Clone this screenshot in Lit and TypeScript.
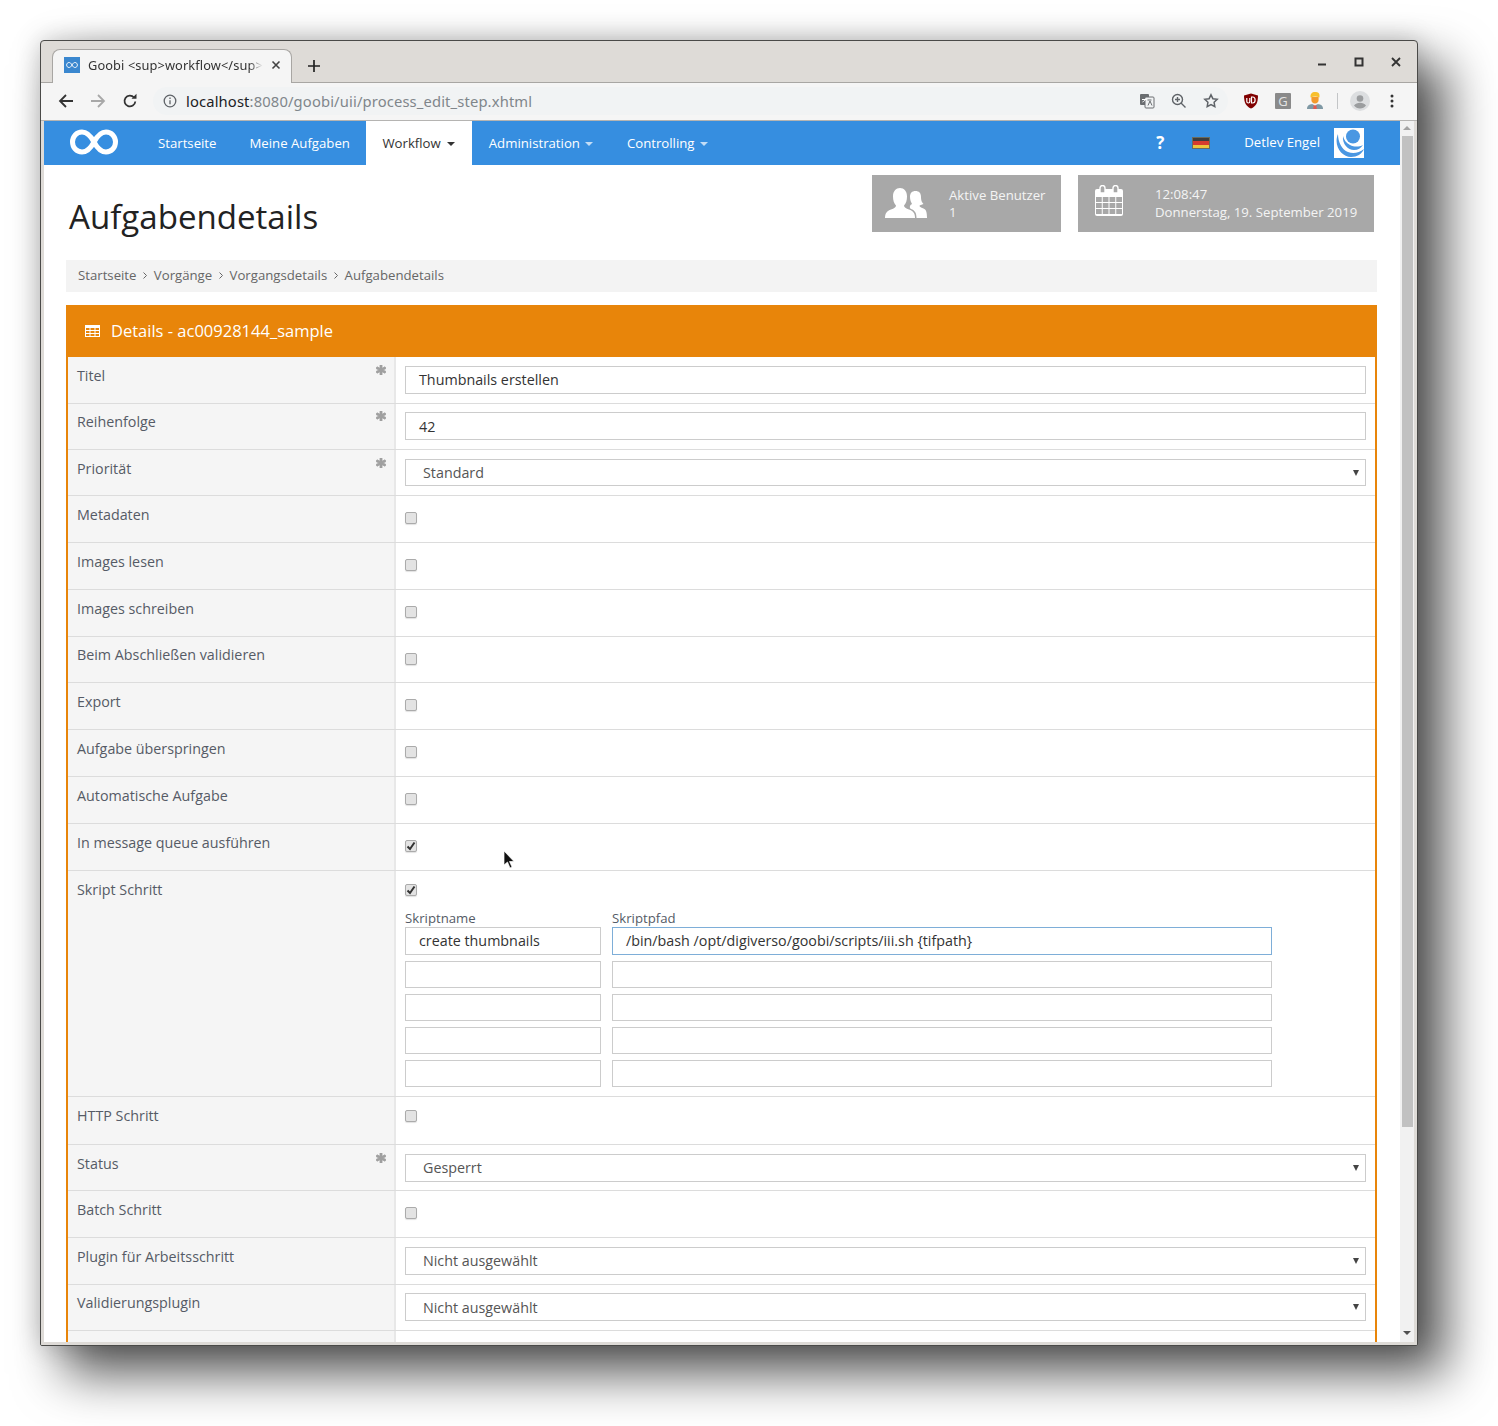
import { LitElement, html, css, svg } from "lit";
import { customElement } from "lit/decorators.js";

type Row = { label: string; h: number; req?: boolean; kind: "input" | "select" | "check" | "checked" | "script" | "blank"; value?: string; cls?: string };

const rows: Row[] = [
  { label: "Titel", h: 47, req: true, kind: "input", value: "Thumbnails erstellen" },
  { label: "Reihenfolge", h: 46, req: true, kind: "input", value: "42", cls: "tight lift" },
  { label: "Priorität", h: 46, req: true, kind: "select", value: "Standard", cls: "short" },
  { label: "Metadaten", h: 47, kind: "check" },
  { label: "Images lesen", h: 47, kind: "check" },
  { label: "Images schreiben", h: 47, kind: "check" },
  { label: "Beim Abschließen validieren", h: 46, kind: "check", cls: "tight" },
  { label: "Export", h: 47, kind: "check" },
  { label: "Aufgabe überspringen", h: 47, kind: "check" },
  { label: "Automatische Aufgabe", h: 47, kind: "check" },
  { label: "In message queue ausführen", h: 47, kind: "checked" },
  { label: "Skript Schritt", h: 226, kind: "script", cls: "up" },
  { label: "HTTP Schritt", h: 48, kind: "check", cls: "up" },
  { label: "Status", h: 46, req: true, kind: "select", value: "Gesperrt" },
  { label: "Batch Schritt", h: 47, kind: "check" },
  { label: "Plugin für Arbeitsschritt", h: 47, kind: "select", value: "Nicht ausgewählt" },
  { label: "Validierungsplugin", h: 46, kind: "select", value: "Nicht ausgewählt", cls: "tight lift" },
  { label: "", h: 47, kind: "blank" },
];

const infinity = (w: number, h: number, sw: number) => svg`<svg width=${w} height=${h} viewBox="0 0 48 26" fill="none" stroke="#fff" stroke-width=${sw}><path d="M24 13C20 5.500 16.500 3 12 3 6.500 3 2.500 7.500 2.500 13S6.500 23 12 23c4.500 0 8-2.500 12-10s7.500-10 12-10c5.500 0 9.500 4.500 9.500 10S41.500 23 36 23c-4.500 0-8-2.500-12-10z"/></svg>`;

const calCols = [2, 8.75, 15.5, 22.25];
const calRows = [12, 18, 24];

@customElement("app-root")
export class AppRoot extends LitElement {
  static styles = css`
    :host { display: block; width: 1498px; height: 1426px; overflow: hidden; background: #fff; font-family: "Open Sans", "Noto Sans", sans-serif; box-sizing: border-box; padding: 40px 0 0 40px; }
    * { box-sizing: border-box; }
    .window { width: 1378px; height: 1306px; background: #dedbd7; border: 1px solid #4a4a48; border-radius: 4px 4px 2px 2px; box-shadow: 26px 26px 50px 2px rgba(0,0,0,.66), 0 0 26px rgba(0,0,0,.2); display: flex; flex-direction: column; overflow: hidden; }
    .titlebar { height: 42px; flex: none; display: flex; align-items: flex-end; padding-left: 11px; border-bottom: 1px solid #a8a6a3; position: relative; }
    .tab { width: 240px; height: 34px; background: #f5f5f5; border: 1px solid #a8a6a3; border-bottom: 0; border-radius: 8px 8px 0 0; display: flex; align-items: center; padding: 0 9px 4px 11px; margin-bottom: -1px; color: #333; white-space: nowrap; }
    .fav { width: 16px; height: 16px; background: #3a87cf; display: flex; align-items: center; justify-content: center; flex: none; margin-right: 8px; }
    .tabtext { width: 175px; overflow: hidden; font-family: "Noto Sans", sans-serif; font-size: 12.8px; letter-spacing: .1px; -webkit-mask-image: linear-gradient(90deg,#000 92%,transparent); mask-image: linear-gradient(90deg,#000 92%,transparent); }
    .tabx { margin-left: 8px; display: flex; }
    .newtab { margin: 0 0 10px 16px; display: flex; }
    .winctl { position: absolute; right: 3px; top: 0; height: 42px; display: flex; }
    .winctl span { width: 37px; display: flex; align-items: center; justify-content: center; height: 42px; }
    .toolbar { height: 38px; flex: none; background: #f5f5f5; border-bottom: 1px solid #b5b4b2; display: flex; align-items: center; padding: 0 0 2px 9px; }
    .navbtn { width: 32px; height: 32px; display: flex; align-items: center; justify-content: center; flex: none; }
    .omni { width: 1075px; height: 28px; margin-left: 7px; background: #f1f3f4; border-radius: 14px; display: flex; align-items: center; padding: 0 1px 0 10px; font-family: "Noto Sans", sans-serif; font-size: 14.75px; color: #80868b; flex: none; }
    .omni b { font-weight: 400; color: #202124; }
    .omni .url { margin-left: 9px; letter-spacing: .14px; }
    .omni .end { margin-left: auto; display: flex; }
    .ic { width: 32px; height: 28px; display: flex; align-items: center; justify-content: center; }
    .ic.first { margin-left: 7px; }
    .ic.prof { width: 28px; }
    .ic.dots { width: 36px; }
    .ext { display: flex; align-items: center; flex: none; }
    .sep { width: 1px; height: 16px; background: #c3c5c7; margin: 0 8px 0 6px; }
    .gl { font-size: 13px; font-family: "Open Sans", sans-serif; fill: #e4e4e4; }
    .body { flex: 1; min-height: 0; display: flex; padding: 0 3px; overflow: hidden; border-bottom: 3px solid #dedbd7; }
    .page { width: 1356px; height: 1221px; background: #fff; overflow: hidden; flex: none; }
    .scroll { width: 14px; flex: none; background: #f1f1f1; display: flex; flex-direction: column; align-items: center; position: relative; }
    .arrow-up { width: 0; height: 0; border: 4px solid transparent; border-top: 0; border-bottom: 4px solid #a3a3a3; margin-top: 5px; }
    .thumb { width: 11px; height: 991px; background: #c1c1c1; margin-top: 6px; }
    .arrow-down { position: absolute; left: 3px; bottom: 7px; width: 0; height: 0; border: 4px solid transparent; border-bottom: 0; border-top: 4px solid #505050; }

    nav { height: 44px; background: #368ee0; display: flex; align-items: stretch; font-size: 13.2px; color: #fff; }
    .logo { width: 97.500px; display: flex; align-items: center; padding-left: 26px; flex: none; }
    .logo svg { margin-top: -3px; }
    .nitem { padding: 0 16.500px; display: flex; align-items: center; white-space: nowrap; }
    .nitem.dd { padding: 0 17px; }
    .nitem.active { background: #fff; color: #333; padding: 0 17px 0 16px; }
    .caret { display: inline-block; width: 0; height: 0; border: 4px solid transparent; border-bottom: 0; border-top: 4px solid currentColor; margin-left: 5px; margin-top: 1px; opacity: .7; }
    .active .caret { opacity: 1; margin-left: 6px; }
    .nright { margin-left: auto; display: flex; align-items: center; padding-right: 36px; }
    .q { font-size: 17px; font-weight: 700; width: 12px; margin-right: 26px; text-align: center; margin-top: -2px; }
    .flag { width: 18px; height: 12px; margin-right: 34px; display: flex; flex-direction: column; border: 1px solid #6a6a5c; }
    .flag i { flex: 1; }
    .flag .k { background: #3c3c3c; }
    .flag .r { background: #d63b2e; }
    .flag .y { background: #edc43c; }
    .user { margin-right: 14px; margin-top: -2px; }
    .avatar { width: 30px; height: 30px; background: #fff; display: flex; }

    .head { height: 95px; padding: 10px 26px 0 25px; display: flex; align-items: flex-start; }
    h1 { margin: 17px 0 0; font-size: 33.100px; line-height: 50px; font-weight: 400; color: #222; }
    .stat { height: 57px; background: #a8a8a8; color: #f4f4f4; font-size: 13.2px; display: flex; flex: none; }
    .stat svg { flex: none; }
    .s1 { width: 189px; margin-left: auto; padding: 12px 0 0 13px; line-height: 17px; }
    .s2 { width: 296px; margin-left: 17px; padding: 10px 0 0 16px; line-height: 18px; }
    .s1 .t { margin-left: 22px; }
    .s2 .t { margin-left: 31px; }
    .crumbs { margin: 0 23px 13px 22px; height: 32px; background: #f3f3f3; display: flex; align-items: center; padding: 0 0 2px 12px; font-size: 13.2px; color: #666; white-space: nowrap; }
    .crumbs .g { margin: 0 6.700px; width: 4px; display: flex; }
    .panel { margin: 0 23px 0 22px; }
    .phead { height: 52px; background: #e8850a; color: #fff; display: flex; align-items: center; padding: 0 0 2px 19px; font-size: 16.5px; }
    .phead svg { margin: 2px 11px 0 0; }
    .pbody { border-left: 2px solid #e8850a; border-right: 2px solid #e8850a; }
    .row { display: flex; border-bottom: 1px solid #dcdcdc; }
    .lab { width: 328px; flex: none; background: #f5f5f5; padding: 9px 8px 0 9px; font-size: 14.3px; line-height: 20px; color: #555b66; display: flex; justify-content: space-between; border-right: 2px solid #e8e8e8; }
    .tight .lab { padding-top: 8px; }
    .star { width: 10px; height: 10px; margin-top: -1px; }
    .val { flex: 1; padding: 9px 9px 0 9px; min-width: 0; }
    .field { height: 28px; border: 1px solid #ccc; background: #fff; padding: 0 13px 2px; display: flex; align-items: center; font-size: 14.3px; color: #333; white-space: nowrap; }
    .lift .field { margin-top: -1px; padding-bottom: 0; }
    .short .field { height: 27px; padding-bottom: 0; }
    .select { padding: 0 17px 2px; position: relative; color: #555; }
    .select::after { content: ""; position: absolute; right: 6px; top: 10px; border: 3.500px solid transparent; border-bottom: 0; border-top: 6px solid #444; }
    .cb { width: 12px; height: 12px; background: #e3e3e3; border: 1px solid #ababab; border-radius: 2px; margin-top: 7px; display: flex; align-items: center; justify-content: center; box-shadow: 0 1px 1px rgba(0,0,0,.12); }
    .up .cb { margin-top: 4px; }
    .sgrid { display: grid; grid-template-columns: 196px 660px; column-gap: 11px; row-gap: 6px; margin-top: 15px; }
    .sgrid .h { font-size: 13.2px; line-height: 14px; color: #555b66; margin-bottom: -6px; height: 16px; }
    .sgrid .field { height: 27px; }
    .sgrid .first { height: 28px; }
    .focus { border-color: #7eaed8; }
    .cursor { position: absolute; left: 503px; top: 850px; }
  `;

  private toolbarIcons() {
    return html`
      <span class="ic"><svg width="16" height="16" viewBox="0 0 16 16"><rect x="1" y="1" width="9" height="11" rx="1" fill="#6a6d70"/><rect x="6" y="4" width="9" height="11" rx="1" fill="#f1f3f4" stroke="#6a6d70"/><path d="M3 6.500h4.500M3.500 9c1.500-.5 2.500-1.500 3-3.500" stroke="#fff" fill="none"/><path d="M8.500 7h4M9 12.500l2-4.500 2 4.500" stroke="#6a6d70" fill="none"/></svg></span>
      <span class="ic"><svg width="16" height="16" viewBox="0 0 16 16" fill="none" stroke="#5f6368" stroke-width="1.400"><circle cx="6.500" cy="6.500" r="5"/><path d="M10 10l4.500 4.500M4 6.500h5M6.500 4v5"/></svg></span>
      <span class="ic"><svg width="16" height="16" viewBox="0 0 16 16" fill="none" stroke="#5f6368" stroke-width="1.500"><path d="M8 1.800l1.900 3.900 4.300.6-3.100 3 .7 4.300L8 11.600l-3.800 2 .7-4.300-3.100-3 4.300-.6z"/></svg></span>`;
  }

  render() {
    return html`
    <div class="window">
      <div class="titlebar">
        <div class="tab">
          <span class="fav">${infinity(12, 8, 3.600)}</span>
          <span class="tabtext">Goobi &lt;sup&gt;workflow&lt;/sup&gt;</span>
          <span class="tabx"><svg width="10" height="10" viewBox="0 0 10 10" stroke="#444" stroke-width="1.600"><path d="M1.500 1.500l7 7M8.500 1.500l-7 7"/></svg></span>
        </div>
        <span class="newtab"><svg width="12" height="12" viewBox="0 0 12 12" stroke="#222" stroke-width="1.700"><path d="M6 0v12M0 6h12"/></svg></span>
        <div class="winctl">
          <span><svg width="10" height="10" viewBox="0 0 10 10"><path d="M1 7.500h8" stroke="#333" stroke-width="1.800"/></svg></span>
          <span><svg width="10" height="10" viewBox="0 0 10 10" fill="none"><rect x="1.500" y="1.500" width="7" height="7" stroke="#333" stroke-width="2"/></svg></span>
          <span><svg width="10" height="10" viewBox="0 0 10 10" stroke="#333" stroke-width="1.800"><path d="M1 1l8 8M9 1l-8 8"/></svg></span>
        </div>
      </div>
      <div class="toolbar">
        <span class="navbtn"><svg width="16" height="16" viewBox="0 0 16 16" fill="none" stroke="#333" stroke-width="1.800"><path d="M15 8H2M8 2L2 8l6 6"/></svg></span>
        <span class="navbtn"><svg width="16" height="16" viewBox="0 0 16 16" fill="none" stroke="#a8a8a8" stroke-width="1.800"><path d="M1 8h13M8 2l6 6-6 6"/></svg></span>
        <span class="navbtn"><svg width="16" height="16" viewBox="0 0 16 16" fill="none" stroke="#333" stroke-width="1.800"><path d="M13.300 8.500A5.400 5.400 0 1 1 12 4.500"/><path d="M9.500 5.800h5v-5z" fill="#333" stroke="none"/></svg></span>
        <div class="omni">
          <svg width="14" height="14" viewBox="0 0 14 14" fill="none" stroke="#5f6368" stroke-width="1.300"><circle cx="7" cy="7" r="5.800"/><path d="M7 6.200v4M7 3.500v1.400"/></svg>
          <span class="url"><b>localhost</b>:8080/goobi/uii/process_edit_step.xhtml</span>
          <span class="end">${this.toolbarIcons()}</span>
        </div>
        <div class="ext">
          <span class="ic first"><svg width="16" height="16" viewBox="0 0 16 16"><path d="M1 2.500L8 .5l7 2c0 7-2 11-7 13C3 13.500 1 9.500 1 2.500z" fill="#800000"/><path d="M3.800 5v3.500a1.500 1.500 0 0 0 3 0V5M8.500 4v6h1.200a2.400 3 0 0 0 0-6z" fill="none" stroke="#fff" stroke-width="1.200"/></svg></span>
          <span class="ic"><svg width="16" height="16" viewBox="0 0 16 16"><rect width="16" height="16" rx="1" fill="#8a8a8a"/><text class="gl" x="8" y="12.700" text-anchor="middle">G</text></svg></span>
          <span class="ic"><svg width="16" height="17" viewBox="0 0 16 17"><path d="M0 17c0-3 1.500-4.500 5.500-5h5c4 .5 5.500 2 5.500 5z" fill="#7f98a4"/><path d="M7 11.500h2l.8 5.500H6.200z" fill="#e2584e"/><path d="M5 12l3 1.500 3-1.500-1-1.500H6z" fill="#eef1f3"/><path d="M4.400 5h7.200v3c0 2-1.600 3.500-3.600 3.500S4.400 10 4.400 8z" fill="#f39a2c"/><path d="M3.600 5.500C3 2 5 0 8 0s5.200 1 4.400 5.500C10 4 6.500 4 3.600 5.500z" fill="#f8c02c"/></svg></span>
          <span class="sep"></span>
          <span class="ic prof"><svg width="20" height="20" viewBox="0 0 20 20"><circle cx="10" cy="10" r="10" fill="#dcdee0"/><circle cx="10" cy="7.500" r="3.300" fill="#9b9d9f"/><path d="M4 14.500c1.500-2 3.500-2.800 6-2.800s4.500.8 6 2.800c-1.500 2-3.500 3-6 3s-4.500-1-6-3z" fill="#9b9d9f"/></svg></span>
          <span class="ic dots"><svg width="4" height="14" viewBox="0 0 4 14" fill="#333"><circle cx="2" cy="2" r="1.500"/><circle cx="2" cy="7" r="1.500"/><circle cx="2" cy="12" r="1.500"/></svg></span>
        </div>
      </div>
      <div class="body">
        <div class="page">
          <nav>
            <div class="logo">${infinity(48, 26, 5)}</div>
            <div class="nitem">Startseite</div>
            <div class="nitem">Meine Aufgaben</div>
            <div class="nitem active">Workflow<span class="caret"></span></div>
            <div class="nitem dd">Administration<span class="caret"></span></div>
            <div class="nitem dd">Controlling<span class="caret"></span></div>
            <div class="nright">
              <span class="q">?</span>
              <span class="flag"><i class="k"></i><i class="r"></i><i class="y"></i></span>
              <span class="user">Detlev Engel</span>
              <span class="avatar"><svg width="30" height="30" viewBox="0 0 30 30" fill="#4a97e2"><circle cx="19" cy="8.500" r="7"/><path d="M4 6C-1 18 8 29 17 29c6 0 11-3 13-8-5 4-11 5-16 3C8 22 4 14 4 6z"/><path d="M9 8c-1 8 5 14 11 14 4 0 7-2 9-5-4 2-9 2-13 0-4-2-6-5-7-9z"/></svg></span>
            </div>
          </nav>
          <div class="head">
            <h1>Aufgabendetails</h1>
            <div class="stat s1">
              <svg width="42" height="32" viewBox="0 0 42 32" fill="#fff"><path d="M0 31c0-5 2-7 6-8.500 3-1.200 5-2 5-4-2-2-3-5-3-9C8 4 11 1 15 1s7 3 7 8.500c0 4-1 7-3 9 0 2 2 2.800 5 4 4 1.500 6 3.500 6 8.500z"/><path d="M27 17c-1-2-2-4-2-7 0-4 2-6 5.500-6S36 6 36 10c0 3 .5 5 2.500 7-2 1-3.500 1-4 1.800 0 1 1 1.600 4 2.700 2.500 1 3.500 3 3.500 9.500H31.500c0-5-1.500-7.500-5.500-9-1.500-.7-1.500-2.500-.5-4z" /></svg>
              <div class="t">Aktive Benutzer<br />1</div>
            </div>
            <div class="stat s2">
              <svg width="30" height="31" viewBox="0 0 30 31"><rect x="1" y="4" width="28" height="27" rx="2" fill="#fff"/><g fill="#a8a8a8">${calRows.map((y) => calCols.map((x) => svg`<rect x=${x} y=${y} width="5.750" height="5"/>`))}</g><path d="M6 8V3a2.500 2.500 0 0 1 5 0v5zM19 8V3a2.500 2.500 0 0 1 5 0v5z" fill="#a8a8a8" stroke="#fff" stroke-width="1.400"/></svg>
              <div class="t">12:08:47<br />Donnerstag, 19. September 2019</div>
            </div>
          </div>
          <div class="crumbs">
            Startseite<span class="g">${this.chev()}</span>Vorgänge<span class="g">${this.chev()}</span>Vorgangsdetails<span class="g">${this.chev()}</span>Aufgabendetails
          </div>
          <div class="panel">
            <div class="phead">
              <svg width="15" height="12" viewBox="0 0 15 12" fill="#fff"><path fill-rule="evenodd" d="M0 0h15v12H0zM1 3v2h3.500V3zM5.500 3v2h4V3zM10.500 3v2H14V3zM1 6v2h3.500V6zM5.500 6v2h4V6zM10.500 6v2H14V6zM1 9v2h3.500V9zM5.500 9v2h4V9zM10.500 9v2H14V9z"/></svg>
              Details - ac00928144_sample
            </div>
            <div class="pbody">
              ${rows.map((r) => this.row(r))}
            </div>
          </div>
        </div>
        <div class="scroll"><span class="arrow-up"></span><span class="thumb"></span><span class="arrow-down"></span></div>
      </div>
    </div>
    <svg class="cursor" width="12" height="20" viewBox="0 0 12 20"><path d="M1 1v14l3.500-3 2.500 6 2-1-2.500-5.500H11z" fill="#111" stroke="#fff" stroke-width=".7"/></svg>`;
  }

  private chev() {
    return svg`<svg width="4" height="7" viewBox="0 0 4 7" fill="none" stroke="#666" stroke-width="1"><path d="M.5 .5l3 3-3 3"/></svg>`;
  }

  private cb(on: boolean) {
    return html`<div class="cb">${on ? svg`<svg width="10" height="10" viewBox="0 0 10 10" fill="none" stroke="#333" stroke-width="2"><path d="M1.500 5.500l2.500 2.500 4.500-6.500"/></svg>` : ""}</div>`;
  }

  private row(r: Row) {
    let v: unknown = "";
    if (r.kind === "input") v = html`<div class="field">${r.value}</div>`;
    if (r.kind === "select") v = html`<div class="field select">${r.value}</div>`;
    if (r.kind === "check") v = this.cb(false);
    if (r.kind === "checked") v = this.cb(true);
    if (r.kind === "script")
      v = html`<div>${this.cb(true)}
        <div class="sgrid">
          <div class="h">Skriptname</div><div class="h">Skriptpfad</div>
          <div class="field first">create thumbnails</div><div class="field first focus">/bin/bash /opt/digiverso/goobi/scripts/iii.sh {tifpath}</div>
          ${[0, 1, 2, 3].map(() => html`<div class="field"></div><div class="field"></div>`)}
        </div></div>`;
    return html`<div class="row ${r.cls ?? ""}" style="height:${r.h}px">
      <div class="lab"><span>${r.label}</span>${r.req ? svg`<svg class="star" viewBox="0 0 10 10" fill="#a0a0a0" stroke="#a0a0a0" stroke-width=".8"><path d="M4 0h2v3.300l3-1.500 1 1.700L7 5l3 1.500-1 1.700-3-1.500V10H4V6.700l-3 1.500-1-1.700L3 5 0 3.500l1-1.700 3 1.500z"/></svg>` : ""}</div>
      <div class="val">${v}</div>
    </div>`;
  }
}
